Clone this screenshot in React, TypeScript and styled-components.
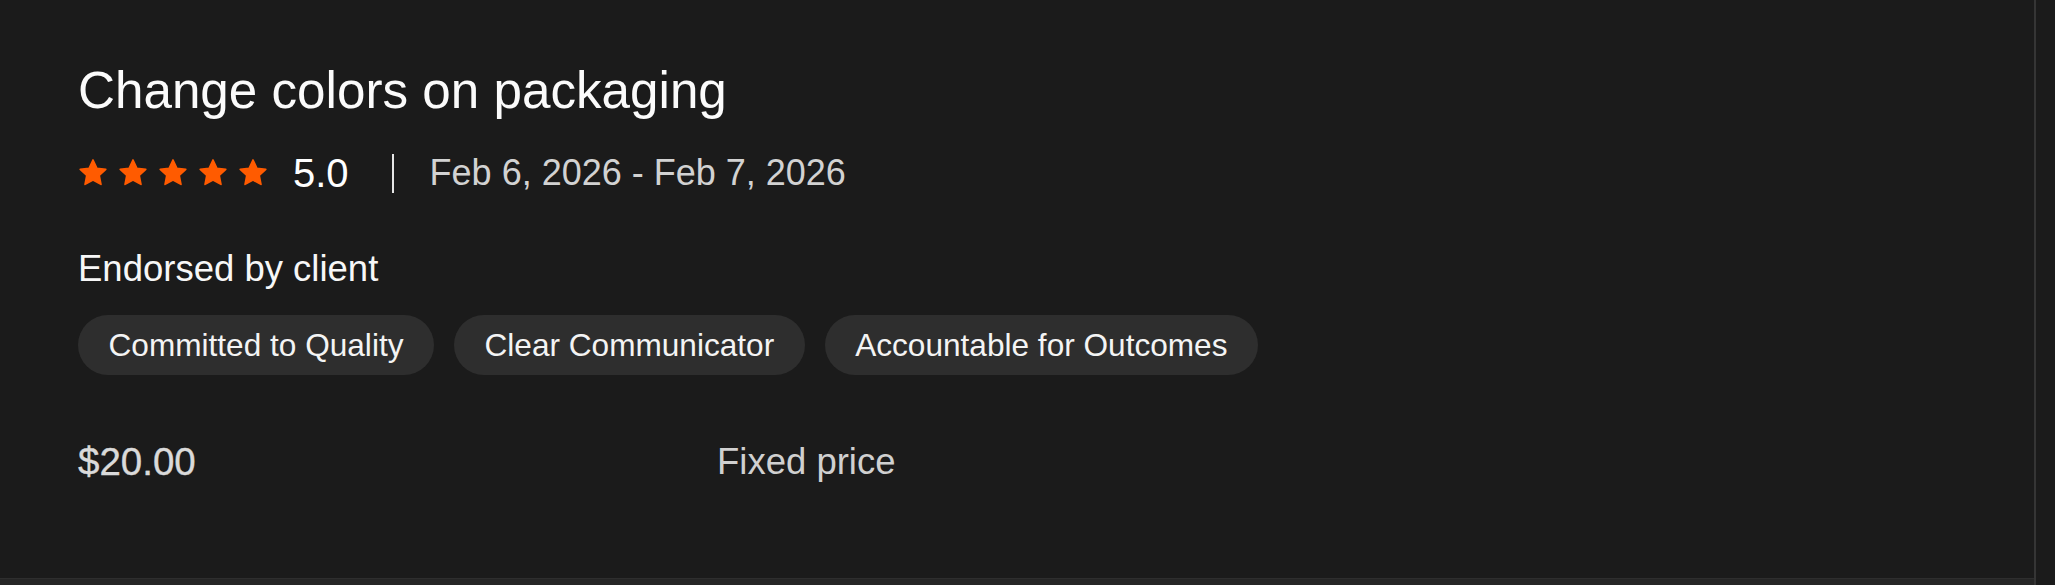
import React from "react";
import styled, { createGlobalStyle } from "styled-components";

const Global = createGlobalStyle`
  html, body, #root { height: 100%; }
  body {
    margin: 0;
    background: #1b1b1b;
    font-family: "Liberation Sans", Arial, Helvetica, sans-serif;
    color: #f7f7f7;
    overflow: hidden;
  }
`;

const Page = styled.div`
  display: flex;
  height: 585px;
  background: #1b1b1b;
`;

const Main = styled.main`
  flex: 1;
  display: flex;
  flex-direction: column;
  min-width: 0;
`;

const Gutter = styled.div`
  width: 19px;
  border-left: 2px solid #353535;
  background: #1b1b1b;
`;

const Card = styled.section`
  height: 578px;
  box-sizing: border-box;
  padding: 61px 0 0 78px;
  display: flex;
  flex-direction: column;
  align-items: flex-start;
`;

const BottomBand = styled.div`
  flex: 1;
  background: #262626;
  border-top: 1px solid #2e2e2e;
`;

const Title = styled.h2`
  margin: 0;
  font-size: 51.2px;
  line-height: 60px;
  font-weight: 400;
  color: #fbfbfb;
`;

const RatingRow = styled.div`
  display: flex;
  align-items: center;
  height: 40px;
  margin-top: 32px;
`;

const Stars = styled.div`
  display: flex;
  gap: 10px;
`;

const Score = styled.span`
  margin-left: 25px;
  font-size: 40px;
  line-height: 40px;
  color: #ffffff;
`;

const Divider = styled.span`
  width: 2px;
  height: 39px;
  margin-left: 43px;
  background: #e6e6e6;
`;

const Dates = styled.span`
  margin-left: 36px;
  font-size: 36px;
  line-height: 40px;
  color: #d2d2d2;
`;

const SectionLabel = styled.div`
  margin-top: 54px;
  font-size: 36.5px;
  line-height: 44px;
  color: #f7f7f7;
`;

const ChipList = styled.div`
  display: flex;
  gap: 20px;
  margin-top: 24px;
`;

const Chip = styled.span`
  display: inline-flex;
  align-items: center;
  height: 60px;
  padding: 0 30.5px;
  border-radius: 30px;
  background: #2e2e2e;
  font-size: 31.6px;
  color: #f4f4f4;
  white-space: nowrap;
`;

const PriceRow = styled.div`
  display: grid;
  grid-template-columns: 639px auto;
  margin-top: 65px;
  font-size: 36.5px;
  line-height: 44px;
`;

const Amount = styled.span`
  color: #dadada;
  font-size: 38.5px;
  -webkit-text-stroke: 0.4px #dadada;
`;

const PriceType = styled.span`
  color: #d0d0d0;
`;

const Star = () => (
  <svg width="30" height="30" viewBox="0 0 24 24" aria-hidden="true">
    <path
      d="M12 1.6l3.1 6.6 7.1.85-5.25 4.9 1.4 7.1L12 17.6l-6.35 3.45 1.4-7.1L1.8 9.05l7.1-.85z"
      fill="#ff5b00"
      stroke="#ff5b00"
      strokeWidth="1.4"
      strokeLinejoin="round"
    />
  </svg>
);

const endorsements = [
  "Committed to Quality",
  "Clear Communicator",
  "Accountable for Outcomes",
];

export default function App() {
  return (
    <>
      <Global />
      <Page>
        <Main>
          <Card>
            <Title>Change colors on packaging</Title>
            <RatingRow>
              <Stars>
                {[0, 1, 2, 3, 4].map((i) => (
                  <Star key={i} />
                ))}
              </Stars>
              <Score>5.0</Score>
              <Divider />
              <Dates>Feb 6, 2026 - Feb 7, 2026</Dates>
            </RatingRow>
            <SectionLabel>Endorsed by client</SectionLabel>
            <ChipList>
              {endorsements.map((e) => (
                <Chip key={e}>{e}</Chip>
              ))}
            </ChipList>
            <PriceRow>
              <Amount>$20.00</Amount>
              <PriceType>Fixed price</PriceType>
            </PriceRow>
          </Card>
          <BottomBand />
        </Main>
        <Gutter />
      </Page>
    </>
  );
}
